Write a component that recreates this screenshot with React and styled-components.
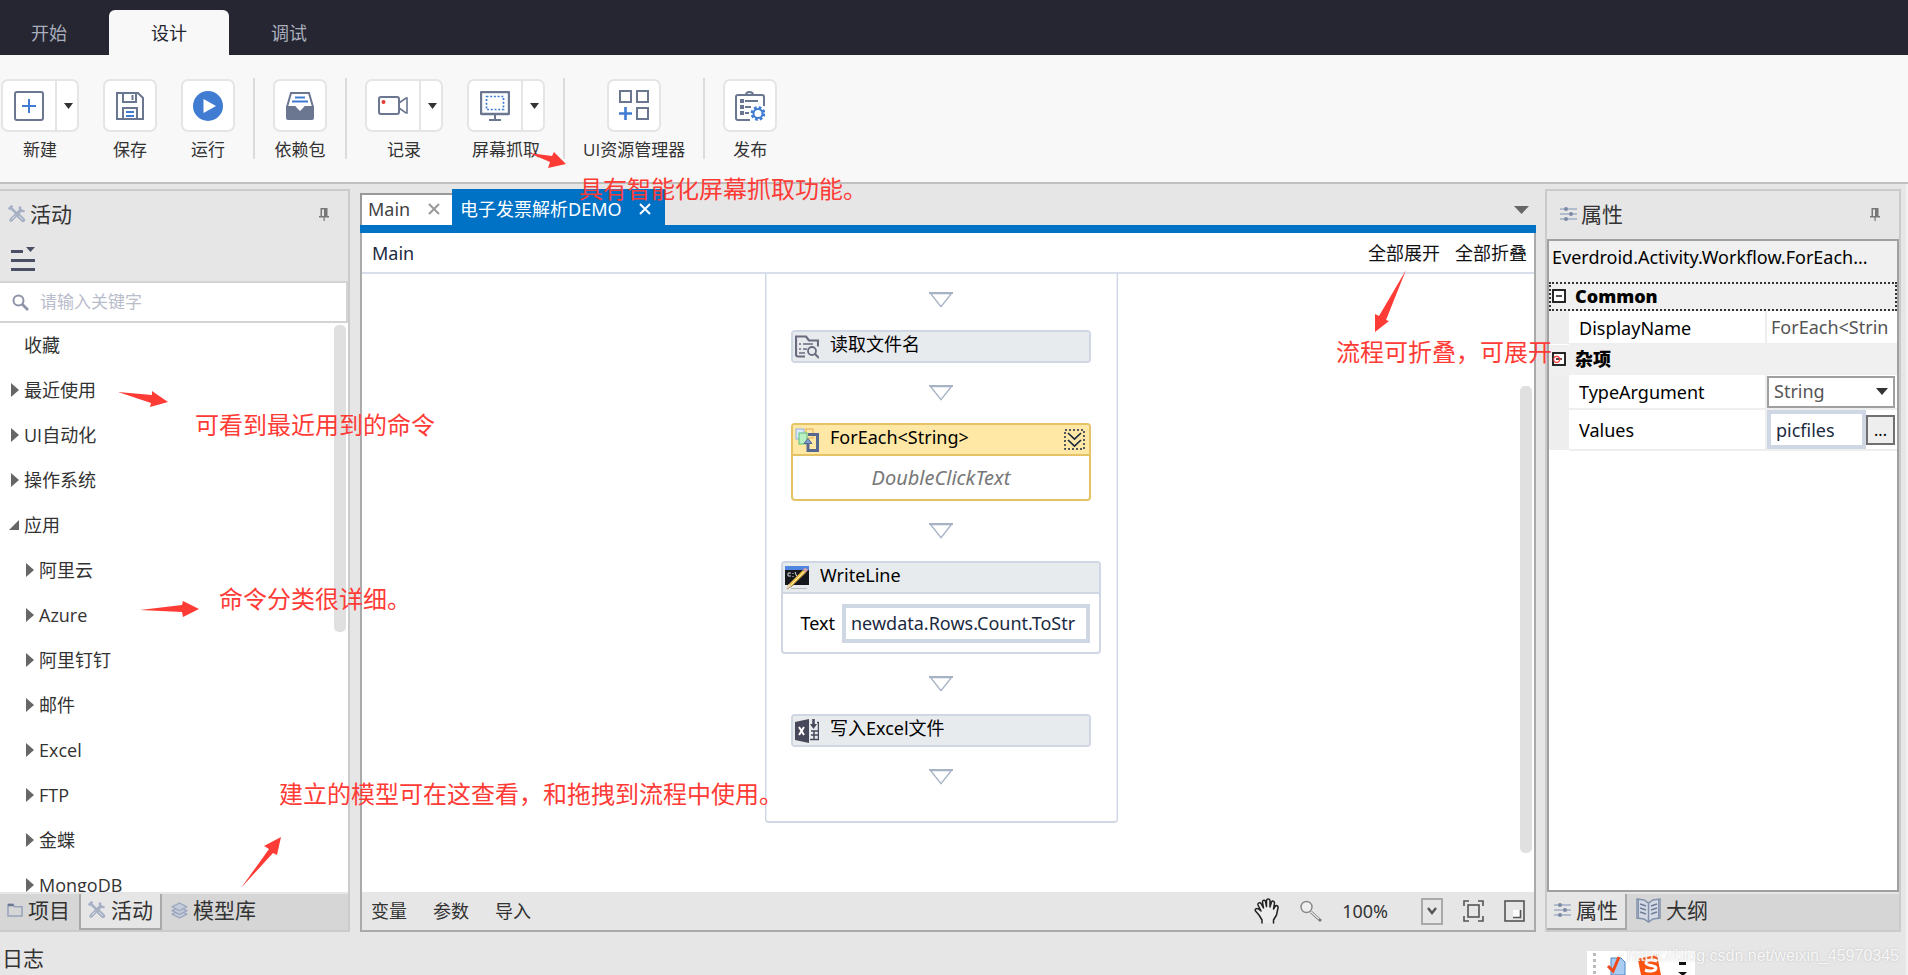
import React from "react";
import styled, { createGlobalStyle, css } from "styled-components";

const sans = `"Open Sans", "Noto Sans CJK SC", sans-serif`;
const wideSans = `"Noto Sans", "Noto Sans CJK SC", sans-serif`;
const line = "#cfd6e4";
const slate = "#6b7790";
const blue = "#3f7cd2";
const red = "#ff3b36";

const Global = createGlobalStyle`
  *, *::before, *::after { box-sizing: border-box; }
  body { margin: 0; background: #e6e6e6; }
  button, input, select { font: inherit; color: inherit; margin: 0; padding: 0; border: 0; background: none; outline: 0; }
  ul { list-style: none; margin: 0; padding: 0; }
  svg { display: block; flex: none; }
`;

const Page = styled.div`
  position: relative;
  display: flex;
  flex-direction: column;
  height: 100vh;
  overflow: hidden;
  font-family: ${sans};
  font-size: 18px;
  line-height: 24px;
  color: #333;
  white-space: nowrap;
  background: #e6e6e6;
`;

/* ---------- top menu ---------- */
const MenuBar = styled.nav`
  display: flex;
  align-items: flex-end;
  flex: none;
  height: 55px;
  background: #252631;
`;
const MenuTab = styled.button`
  width: 120px;
  height: 45px;
  border-radius: 6px 6px 0 0;
  color: ${(p) => (p.$active ? "#252631" : "#a9aebd")};
  background: ${(p) => (p.$active ? "#f8f8f8" : "transparent")};
  &:first-child { width: 109px; padding-right: 11px; }
`;

/* ---------- ribbon ---------- */
const Ribbon = styled.header`
  display: flex;
  align-items: flex-start;
  flex: none;
  height: 129px;
  padding: 23px 0 0 1px;
  background: #f8f8f8;
  border-bottom: 2px solid #bfbfbf;
  font-size: 17px;
`;
const RibbonGroup = styled.div`
  display: flex;
  gap: 24px;
  padding: 1px 18px 0;
  border-left: 2px solid #dcdcdc;
  height: 81px;
  &:first-child { border-left: 0; padding-left: 0; }
`;
const Tool = styled.div`
  display: flex;
  flex-direction: column;
  align-items: center;
  gap: 6px;
`;
const ToolFrame = styled.div`
  display: flex;
  flex: none;
  height: 53px;
  border: 2px solid #e5e5e5;
  border-radius: 7px;
  background: #fff;
`;
const ToolButton = styled.button`
  display: grid;
  place-items: center;
  width: ${(p) => (p.$split ? 52 : 50)}px;
`;
const SplitButton = styled.button`
  && {
    display: grid;
    place-items: center;
    width: 22px;
    padding-left: 3px;
    border-left: 2px solid #e5e5e5;
  }
`;

/* ---------- workspace ---------- */
const Workspace = styled.main`
  display: flex;
  flex: 1;
  min-height: 0;
  padding: 5px 5px 0 0;
  border-right: 2px solid #f2f2f2;
`;
const SidePanel = styled.section`
  display: flex;
  flex-direction: column;
  flex: none;
  width: ${(p) => p.$width}px;
  border: 2px solid #cbcbcb;
  ${(p) => p.$flush && css`border-left: 0;`}
`;
const PanelHeader = styled.div`
  display: flex;
  align-items: center;
  gap: 4px;
  height: 48px;
  flex: none;
  padding: 0 ${(p) => p.$right}px 2px ${(p) => p.$left}px;
  font-size: 21px;
`;
const PinButton = styled.button`
  margin-left: auto;
`;
const FilterRow = styled.div`
  flex: none;
  height: 42px;
  padding: 8px 11px;
`;
const SearchBox = styled.label`
  display: flex;
  align-items: center;
  gap: 11px;
  flex: none;
  height: 42px;
  padding-left: 12px;
  border: 2px solid #d3d3d3;
  border-left: 0;
  background: #fff;
  font-size: 17px;
  input { flex: 1; min-width: 0; }
  input::placeholder { color: #b9bcca; opacity: 1; }
`;
const TreeArea = styled.div`
  display: flex;
  justify-content: space-between;
  flex: 1;
  min-height: 0;
  overflow: hidden;
  background: #fff;
`;
const Tree = styled.ul`
  flex: 1;
  min-width: 0;
`;
const TreeItem = styled.button`
  display: flex;
  align-items: center;
  gap: 5px;
  height: 45px;
  && { padding: 0 0 2px ${(p) => (p.$level ? 24 : 9)}px; }
`;
const Marker = styled.span`
  display: grid;
  align-items: center;
  justify-items: end;
  width: 10px;
  height: 14px;
`;
const Thumb = styled.div`
  flex: none;
  width: 12px;
  height: ${(p) => p.$length}px;
  margin: ${(p) => p.$top}px 2px 0 0;
  border-radius: 5px;
  background: #e0e0e0;
`;
const DockTabs = styled.div`
  display: flex;
  flex: none;
  height: 38px;
  border-top: 2px solid #e6e6e6;
  background: #d6d6d6;
  font-size: 21px;
`;
const DockTab = styled.button`
  && {
    display: flex;
    align-items: center;
    gap: 5px;
    padding: 0 7px 2px;
    border: solid transparent;
    border-width: 0 2px 2px;
    ${(p) => p.$first && css`border-left-width: 0;`}
    ${(p) => p.$active && css`
      background: #e6e6e6;
      border-color: #a9a9a9;
    `}
  }
`;

/* ---------- designer ---------- */
const Designer = styled.section`
  display: flex;
  flex-direction: column;
  flex: 1;
  min-width: 0;
  margin: 0 9px 0 10px;
  font-family: ${wideSans};
`;
const DocTabs = styled.div`
  display: flex;
  align-items: flex-end;
  flex: none;
  height: 44px;
  border-bottom: 8px solid #0072c6;
`;
const DocTab = styled.div`
  display: flex;
  align-items: center;
  justify-content: space-between;
  width: ${(p) => (p.$active ? 213 : 92)}px;
  height: ${(p) => (p.$active ? 36 : 32)}px;
  padding: ${(p) => (p.$active ? "3px 14px 0 8px" : "0 12px 2px 6px")};
  color: ${(p) => (p.$active ? "#fff" : "#444")};
  background: ${(p) => (p.$active ? "#0072c6" : "#fff")};
  ${(p) => !p.$active && css`
    border: solid #999;
    border-width: 2px 0 0 2px;
  `}
`;
const TabList = styled.button`
  && { margin: 0 7px 11px auto; }
`;
const DesignerFrame = styled.div`
  display: flex;
  flex-direction: column;
  flex: 1;
  min-height: 0;
  border: solid #aaa;
  border-width: 0 2px 2px;
  background: #fff;
`;
const Breadcrumb = styled.div`
  display: flex;
  align-items: center;
  gap: 15px;
  flex: none;
  height: 41px;
  padding: 0 7px 0 10px;
  border-bottom: 2px solid #d8deea;
  color: #111;
`;
const Crumb = styled.span`
  margin-right: auto;
  color: #1b2a41;
`;
const Canvas = styled.div`
  display: grid;
  grid-template-columns: 1fr 14px;
  flex: 1;
  min-height: 0;
  overflow: hidden;
`;
const Sequence = styled.div`
  display: flex;
  flex-direction: column;
  align-items: center;
  gap: 22px;
  justify-self: center;
  align-self: start;
  width: 353px;
  padding: 18px 0 36px;
  border: solid ${line};
  border-width: 0 1px 2px;
  border-radius: 0 0 4px 4px;
  box-shadow: inset 1px 0 #eceff5, inset -1px 0 #eceff5;
`;
const Node = styled.div`
  width: ${(p) => (p.$wide ? 320 : 300)}px;
  border: 2px solid ${(p) => (p.$selected ? "#e5c365" : line)};
  border-radius: 4px;
  background: #fff;
  overflow: hidden;
`;
const NodeHead = styled.div`
  display: flex;
  align-items: center;
  gap: 11px;
  height: 29px;
  padding: 0 4px 0 2px;
  color: #000;
  background: ${(p) => (p.$selected ? "#ffe8a6" : "#e8ebee")};
  span { padding-bottom: 5px; }
  button { margin-left: auto; }
`;
const NodeBody = styled.div`
  display: flex;
  align-items: center;
  justify-content: ${(p) => (p.$field ? "flex-end" : "center")};
  gap: 7px;
  height: ${(p) => p.$height}px;
  padding: 0 9px;
  border-top: 2px solid ${(p) => (p.$selected ? "#e5c365" : line)};
  color: #000;
`;
const Hint = styled.em`
  font-size: 20px;
  color: #777;
`;
const ExprInput = styled.input`
  && {
    width: ${(p) => p.$width}px;
    height: 39px;
    padding: 0 5px;
    border: 4px solid ${line};
    background: #fff;
    color: #1b2a41;
  }
`;
const StatusBar = styled.div`
  display: flex;
  align-items: center;
  flex: none;
  gap: 26px;
  height: 38px;
  padding: 0 9px;
  background: #e6e6e6;
`;
const ZoomTools = styled.div`
  display: flex;
  align-items: center;
  gap: 20px;
  margin-left: auto;
`;
const ZoomField = styled.div`
  display: flex;
  align-items: center;
  gap: 33px;
`;
const ZoomDrop = styled.button`
  && {
    display: grid;
    place-items: center;
    width: 22px;
    height: 27px;
    border: 2px solid #a9a9a9;
  }
`;

/* ---------- property grid ---------- */
const Grid = styled.div`
  flex: 1;
  min-height: 0;
  border: 2px solid #a0a0a0;
  background: #fff;
  color: #000;
  font-family: ${wideSans};
`;
const GridTitle = styled.div`
  height: 41px;
  padding: 4px 3px 0;
  background: #f0f0f0;
`;
const PropTable = styled.table`
  width: 100%;
  table-layout: fixed;
  border-collapse: collapse;
  td, th { padding: 0; text-align: left; font-weight: 400; overflow: hidden; }
`;
const GutterCol = styled.col`
  width: 20px;
`;
const NameCol = styled.col`
  width: 197px;
`;
const CategoryRow = styled.tr`
  height: ${(p) => (p.$focus ? 29 : 31)}px;
  background: #f0f0f0;
  ${(p) => p.$focus && css`outline: 2px dotted #333; outline-offset: -2px;`}
  && th { font-weight: 700; padding-bottom: 2px; }
`;
const CategoryToggle = styled.button`
  && {
    display: flex;
    align-items: center;
    gap: 9px;
    padding-left: 3px;
  }
`;
const PropRow = styled.tr`
  height: ${(p) => p.$height}px;
`;
const Gutter = styled.td`
  background: #eee;
`;
const NameCell = styled.th`
  && {
    padding: 1px 0 0 10px;
    border: solid #eee;
    border-width: 0 2px 2px 0;
  }
`;
const ValueCell = styled.td`
  border-bottom: 2px solid #eee;
  color: #555;
`;
const ReadOnlyValue = styled.span`
  display: block;
  margin: 0 4px;
  overflow: hidden;
`;
const SelectWrap = styled.div`
  display: grid;
  align-items: center;
  height: 32px;
  margin-right: 2px;
  border: 2px solid #a0a0a0;
  select {
    grid-area: 1 / 1;
    appearance: none;
    padding: 0 5px 2px;
  }
  svg { grid-area: 1 / 1; justify-self: end; margin-right: 5px; pointer-events: none; }
`;
const ValueEditor = styled.div`
  display: flex;
  align-items: center;
  margin-right: 2px;
`;
const MoreButton = styled.button`
  && {
    flex: 1;
    height: 30px;
    border: 2px solid #707070;
    background: #eee;
    color: #000;
    font-size: 16px;
  }
`;

/* ---------- footer and overlays ---------- */
const LogBar = styled.footer`
  display: flex;
  align-items: center;
  flex: none;
  height: 43px;
  padding: 8px 2px 0;
  border-right: 2px solid #f2f2f2;
  font-size: 21px;
`;
const Ime = styled.div`
  position: absolute;
  right: 213px;
  bottom: 0;
  width: 108px;
  height: 24px;
  background: #fff;
`;
const Watermark = styled.div`
  position: absolute;
  right: 9px;
  bottom: 7px;
  font-family: "Liberation Sans", sans-serif;
  font-size: 16px;
  color: rgba(255, 255, 255, 0.85);
  text-shadow: 0 0 2px rgba(150, 150, 150, 0.5);
`;
const Note = styled.div`
  position: absolute;
  left: ${(p) => p.$x}px;
  top: ${(p) => p.$y}px;
  font-size: 24px;
  line-height: 36px;
  color: ${red};
  pointer-events: none;
`;
const ArrowLayer = styled.svg`
  position: absolute;
  left: 0;
  top: 0;
  pointer-events: none;
  fill: ${red};
`;

/* ---------- icons ---------- */
const Down = ({ w = 9, h = 6, fill = "#333" }) => (
  <svg width={w} height={h} viewBox="0 0 10 6" preserveAspectRatio="none"><path d="M0 0h10L5 6z" fill={fill} /></svg>
);
const Close = ({ color }) => (
  <svg width="12" height="12" viewBox="0 0 12 12" stroke={color} strokeWidth="2"><path d="M1 1l10 10M11 1L1 11" /></svg>
);
const Pin = () => (
  <svg width="10" height="13" viewBox="0 0 10 13">
    <path d="M1.500 0h7v8h1.500v1.500H0V8h1.500z" fill="#777" /><path d="M3 1.500h2V8H3z" fill="#e6e6e6" /><path d="M4.500 9h1.200v4H4.500z" fill="#777" />
  </svg>
);
const ToolsIcon = () => (
  <svg width="18" height="18" viewBox="0 0 18 18" fill="none" stroke="#a7b1c5" strokeLinecap="round">
    <path d="M3 3l6 6" strokeWidth="2.600" /><path d="M11 11l4 4" strokeWidth="4.400" />
    <path d="M3 15L12.500 5.500" strokeWidth="3.600" /><path d="M12 2.500a3 3 0 0 0 3.500 3.500M1.500 3.500l2-2" strokeWidth="2.600" />
    <path d="M11.500 11.500l3 3M4 14l3-3" stroke="#dfe3ea" strokeWidth="1" />
  </svg>
);
const SlidersIcon = () => (
  <svg width="17" height="16" viewBox="0 0 17 16" stroke="#a3aec3" strokeWidth="1.500" fill="#7d8ba6">
    <path d="M0 3h17M0 8h17M0 13h17" /><g stroke="#7d8ba6"><circle cx="6" cy="3" r="1.300" /><circle cx="11" cy="8" r="1.300" /><circle cx="6" cy="13" r="1.300" /></g>
  </svg>
);
const FolderIcon = () => (
  <svg width="16" height="14" viewBox="0 0 16 14" fill="none" stroke="#97a3bb" strokeWidth="1.500">
    <path d="M1 1.500h5l1.500 2.200H15V13H1z" /><path d="M1 2h5.500" stroke="#6b7790" strokeWidth="2.500" />
  </svg>
);
const LayersIcon = () => (
  <svg width="17" height="17" viewBox="0 0 17 17" stroke="#9aa6bd" strokeWidth="1.300" fill="#c3cad8" strokeLinejoin="round">
    <path d="M8.500 8.500L16 12.200 8.500 16 1 12.200z" /><path d="M8.500 5L16 8.600 8.500 12.400 1 8.600z" /><path d="M8.500 1L16 4.800 8.500 8.800 1 4.800z" />
  </svg>
);
const BookIcon = () => (
  <svg width="25" height="25" viewBox="0 0 25 25" fill="#d3dae6" stroke="#8491ab" strokeWidth="1.500">
    <path d="M1 1l7 1 4.500 3L17 2l7-1v19l-7 1-4.500 3L8 21l-7-1z" /><path d="M12.500 5v19" fill="none" /><path d="M2.500 2v18M22.500 2v18" fill="none" strokeWidth="1" />
    <path d="M4 6l6 2M4 10l6 2M4 14l6 2M15 8l6-2M15 12l6-2M15 16l6-2" fill="none" stroke="#6f7d99" />
  </svg>
);
const MenuIcon = () => (
  <svg width="24" height="24" viewBox="0 0 24 24" fill="#4b4f63"><path d="M0 3h12v3H0zM0 12h24v3H0zM0 21h24v3H0zM15 0h9l-4.500 5z" /></svg>
);
const SearchIcon = () => (
  <svg width="17" height="17" viewBox="0 0 17 17" fill="none" stroke="#8d93a8"><circle cx="6.500" cy="6.500" r="5" strokeWidth="2" /><path d="M10 10l6 6" strokeWidth="2.600" /></svg>
);
const NewIcon = () => (
  <svg width="30" height="30" viewBox="0 0 30 30" fill="none" strokeWidth="2"><rect x="1" y="1" width="28" height="28" rx="2" stroke={slate} /><path d="M15 8v14M8 15h14" stroke={blue} /></svg>
);
const SaveIcon = () => (
  <svg width="28" height="28" viewBox="0 0 28 28" fill="none" stroke={slate} strokeWidth="2">
    <path d="M1 1h21l5 5v21H1z" /><path d="M7 1v9h13V1M16.500 3v5M7 27V16h14v11" /><path d="M10 20h8M10 24h8" stroke={blue} />
  </svg>
);
const RunIcon = () => (
  <svg width="30" height="30" viewBox="0 0 30 30"><circle cx="15" cy="15" r="15" fill={blue} /><path d="M10.500 8l12.500 7-12.500 7z" fill="#fff" /></svg>
);
const PackageIcon = () => (
  <svg width="28" height="28" viewBox="0 0 28 28">
    <path d="M1 15L5 1h18l4 14" fill="#fff" stroke={slate} strokeWidth="2" /><path d="M9 5.500h10M6 9.500h16" stroke={blue} strokeWidth="2" />
    <path d="M0 14h9c1 0 1 1 2 2l3 3 3-3c1-1 1-2 2-2h9v12a2 2 0 0 1-2 2H2a2 2 0 0 1-2-2z" fill={slate} />
  </svg>
);
const RecordIcon = () => (
  <svg width="30" height="20" viewBox="0 0 30 20" fill="none" stroke={slate} strokeWidth="2">
    <rect x="1" y="1" width="20" height="17" rx="2" /><path d="M21 7l7-5h1v15h-1l-7-5" strokeWidth="1.600" /><circle cx="5.500" cy="6" r="2" fill="#e23b32" stroke="none" />
  </svg>
);
const ScreenIcon = () => (
  <svg width="30" height="30" viewBox="0 0 30 30" fill="none" stroke={slate} strokeWidth="2">
    <rect x="1" y="1" width="28" height="22" rx="1" strokeWidth="2.400" /><path d="M15 24v5M9 29h12" /><rect x="6.500" y="5.500" width="17" height="13" stroke={blue} strokeDasharray="2 1.700" strokeWidth="1.700" />
  </svg>
);
const UiIcon = () => (
  <svg width="31" height="31" viewBox="0 0 31 31" fill="none" stroke={slate} strokeWidth="2"><path d="M1 1h11v11H1zM18 1h11v11H18zM18 18h11v11H18z" /><path d="M6.500 17v13M0 23.500h13" stroke={blue} strokeWidth="2.600" /></svg>
);
const PublishIcon = () => (
  <svg width="30" height="30" viewBox="0 0 30 30" fill="none" stroke={slate} strokeWidth="2">
    <path d="M15 29H3a2 2 0 0 1-2-2V6a2 2 0 0 1 2-2h24a2 2 0 0 1 2 2v9" /><path d="M11 4c0-4 7-4 7 0" />
    <path d="M10 10h13M10 16h6M10 22h4" /><path d="M5 10h4M5 16h4M5 22h4" strokeWidth="4" />
    <circle cx="23" cy="22.500" r="6" stroke={blue} strokeWidth="2.800" strokeDasharray="2.700 2" /><circle cx="23" cy="22.500" r="4.500" stroke={blue} strokeWidth="2" />
  </svg>
);
const Connector = () => (
  <svg width="24" height="16" viewBox="0 0 24 16" fill="#fff" stroke="#a7b3c5"><path d="M1.500 1.500h21L12 14.700z" strokeWidth="1.400" /><path d="M0 1h24" strokeWidth="2" /></svg>
);
const ReadFileIcon = () => (
  <svg width="24" height="24" viewBox="0 0 24 24" fill="none" stroke="#6a6b7e" strokeWidth="2.200">
    <path d="M10 21.500H3a2 2 0 0 1-2-2V1.500h10l3 4h9v6" /><path d="M4 9h2M8 9h10M4 14h2M8 14h4M4 18h6" strokeWidth="1.600" /><circle cx="17" cy="16" r="4" strokeWidth="1.800" /><path d="M20 19l4 4" />
  </svg>
);
const ForEachIcon = () => (
  <svg width="24" height="24" viewBox="0 0 24 24" strokeWidth="1">
    <rect x="1" y="1" width="8" height="10" fill="#dce9fb" stroke="#8fb0e0" /><rect x="11" y="1" width="7" height="9" fill="#ffe9a8" stroke="#e0b050" /><rect x="4" y="5" width="8" height="11" fill="#b9f0c4" stroke="#5cc07c" />
    <path d="M13 6.500h9.500v16H13V14" fill="none" stroke="#56688f" strokeWidth="3" /><path d="M9 15.500l4-5 4 5z" fill="#7f9fd0" stroke="#56688f" />
  </svg>
);
const WriteLineIcon = () => (
  <svg width="24" height="24" viewBox="0 0 24 24">
    <path d="M0 0h24v19H0z" fill="#15171c" /><path d="M0 0h24v4H0z" fill="#4f86e0" /><path d="M6 7H3v3h3M8 7v1M8 10v1M10 6l2 5" fill="none" stroke="#ddd" />
    <path d="M6 22.500h16" stroke="#bbb" /><path d="M2 23l2-5L18 4l3 2.500L7 20z" fill="#eec044" stroke="#7c6840" strokeWidth=".8" /><path d="M6 19L19.500 5.300" stroke="#fff0b8" strokeWidth="1" /><path d="M1 23.500l2.500-5.500 3 2z" fill="#e9d8b8" /><path d="M18 4l2-2.500 3 2.500-2 2.500z" fill="#dca0a8" />
  </svg>
);
const ExcelIcon = () => (
  <svg width="24" height="24" viewBox="0 0 24 24" fill="none" stroke="#47485a">
    <path d="M0 3l14-3v24L0 21z" fill="#47485a" stroke="none" /><path d="M4 8l5 8M9 8l-5 8" stroke="#fff" strokeWidth="2" />
    <path d="M15 20.500h8.500v-17H22M16 12h7M16 16h7M19 12v8" strokeWidth="1.500" /><path d="M18.500 0v6" strokeWidth="2.500" /><path d="M15 5h7l-3.500 5z" fill="#47485a" stroke="none" />
  </svg>
);
const ExpandIcon = () => (
  <svg width="21" height="21" viewBox="0 0 21 21" fill="none" stroke="#1b2a41"><rect x="1" y="1" width="19" height="19" strokeDasharray="2 2" strokeWidth="1.500" /><path d="M4 4l6.500 6L17 4M4 11l6.500 6 6.500-6" strokeWidth="1.700" /></svg>
);
const HandIcon = () => (
  <svg width="26" height="26" viewBox="0 0 26 26" fill="#ededed" stroke="#222" strokeWidth="1.500" strokeLinejoin="round" strokeLinecap="round">
    <path d="M8 25v-3l-3-5-3.500-4c-1-2 1-3 3-2L7 13 4 7c-.5-2 2-3 3-1.500L9.500 10 8.500 4c0-2 2.500-2.500 3-.5l1 5V2.500c.500-2 3-2 3.500 0V9l1.500-5c1-1.500 3-1 3 1l-1 6 1.500-2.500c1-1.500 3.500-1 3 1.500l-1.500 7-3 5v3" />
  </svg>
);
const LoupeIcon = () => (
  <svg width="22" height="22" viewBox="0 0 22 22"><circle cx="6.500" cy="7" r="5.500" fill="#efefef" stroke="#888" strokeWidth="1.400" /><path d="M11 12l10 9" stroke="#777" strokeWidth="2.800" /><path d="M11 12l8 7" stroke="#eee" strokeWidth="1.200" /></svg>
);
const FitIcon = () => (
  <svg width="21" height="22" viewBox="0 0 21 22" fill="none" stroke="#555" strokeWidth="1.600"><rect x="5" y="5" width="11" height="12" /><path d="M1 6V1h5M15 1h5v5M20 16v5h-5M6 21H1v-5" /></svg>
);
const OverviewIcon = () => (
  <svg width="21" height="22" viewBox="0 0 21 22" fill="none" stroke="#555" strokeWidth="1.600"><rect x="1" y="1" width="19" height="20" /><path d="M9 10h7v7H9z" fill="#fff" stroke="none" /><path d="M16.500 10v7.500H9" /></svg>
);
const ToggleBox = () => (
  <svg width="14" height="14" viewBox="0 0 14 14" fill="#fff" stroke="#111"><rect x="1" y="1" width="12" height="12" strokeWidth="1.800" /><path d="M4 7h6" strokeWidth="1.500" /></svg>
);
const ImeIcons = () => (
  <svg width="108" height="24" viewBox="0 0 108 24">
    <path d="M7.500 2v22" stroke="#bbb" strokeWidth="3" strokeDasharray="3 3" />
    <path d="M24 7h10l4 4v13H24z" fill="#a9cdf2" stroke="#4c86c8" /><path d="M21 15l5 5 6-14" fill="none" stroke="#f04a1c" strokeWidth="3" />
    <path d="M51 9q1-2 3-2l16-3 4 20H54z" fill="#fb5412" /><path d="M70 10c-6-2-11-1-11 2s10 2 10 5-6 4-11 2" fill="none" stroke="#fff" strokeWidth="3" />
    <path d="M92 11h7v3h-7zM91 21h9l-4 4z" fill="#111" />
  </svg>
);

/* ---------- data ---------- */
const ribbon = [
  [["新建", NewIcon, true], ["保存", SaveIcon], ["运行", RunIcon]],
  [["依赖包", PackageIcon]],
  [["记录", RecordIcon, true], ["屏幕抓取", ScreenIcon, true]],
  [["UI资源管理器", UiIcon]],
  [["发布", PublishIcon]],
];
const tree = [
  ["收藏", 0, ""], ["最近使用", 0, "closed"], ["UI自动化", 0, "closed"], ["操作系统", 0, "closed"], ["应用", 0, "open"],
  ["阿里云", 1, "closed"], ["Azure", 1, "closed"], ["阿里钉钉", 1, "closed"], ["邮件", 1, "closed"],
  ["Excel", 1, "closed"], ["FTP", 1, "closed"], ["金蝶", 1, "closed"], ["MongoDB", 1, "closed"],
];
const notes = [
  ["具有智能化屏幕抓取功能。", 579, 171],
  ["可看到最近用到的命令", 195, 407],
  ["命令分类很详细。", 219, 581],
  ["建立的模型可在这查看，和拖拽到流程中使用。", 279, 776],
  ["流程可折叠，可展开。", 1336, 334],
];
const arrows = [
  "529,153 552,156 554,152 566,164 548,168 550,162",
  "118,392 152,395 152,391 168,402 150,407 151,403",
  "140,610 182,605 183,601 199,609 183,617 182,612",
  "241,888 269,849 264,846 281,837 277,855 273,853",
  "1406,270 1386,320 1389,321 1375,332 1375,314 1379,316",
];

const Header = ({ title, icon, left, right }) => (
  <PanelHeader $left={left} $right={right}>
    {icon}<span>{title}</span><PinButton aria-label="固定"><Pin /></PinButton>
  </PanelHeader>
);

export default function App() {
  return (
    <Page>
      <Global />
      <MenuBar>
        <MenuTab>开始</MenuTab><MenuTab $active>设计</MenuTab><MenuTab>调试</MenuTab>
      </MenuBar>
      <Ribbon>
        {ribbon.map((group, i) => (
          <RibbonGroup key={i}>
            {group.map(([label, Icon, split]) => (
              <Tool key={label}>
                <ToolFrame>
                  <ToolButton $split={split} aria-label={label}><Icon /></ToolButton>
                  {split && <SplitButton aria-label={label + "选项"}><Down /></SplitButton>}
                </ToolFrame>
                <span>{label}</span>
              </Tool>
            ))}
          </RibbonGroup>
        ))}
      </Ribbon>

      <Workspace>
        <SidePanel $width={350} $flush>
          <Header title="活动" icon={<ToolsIcon />} left={8} right={19} />
          <FilterRow><button aria-label="筛选"><MenuIcon /></button></FilterRow>
          <SearchBox><SearchIcon /><input type="text" aria-label="搜索" placeholder="请输入关键字" /></SearchBox>
          <TreeArea>
            <Tree>
              {tree.map(([label, level, state]) => (
                <li key={label}>
                  <TreeItem $level={level}>
                    <Marker>
                      {state === "closed" && <svg width="8" height="14" viewBox="0 0 8 14"><path d="M0 0l8 7-8 7z" fill="#666" /></svg>}
                      {state === "open" && <svg width="10" height="10" viewBox="0 0 10 10"><path d="M10 0v10H0z" fill="#666" /></svg>}
                    </Marker>
                    {label}
                  </TreeItem>
                </li>
              ))}
            </Tree>
            <Thumb $length={307} $top={2} />
          </TreeArea>
          <DockTabs>
            <DockTab $first><FolderIcon /><span>项目</span></DockTab>
            <DockTab $active><ToolsIcon /><span>活动</span></DockTab>
            <DockTab><LayersIcon /><span>模型库</span></DockTab>
          </DockTabs>
        </SidePanel>

        <Designer>
          <DocTabs>
            <DocTab><span>Main</span><button aria-label="关闭"><Close color="#999" /></button></DocTab>
            <DocTab $active><span>电子发票解析DEMO</span><button aria-label="关闭"><Close color="#fff" /></button></DocTab>
            <TabList aria-label="标签列表"><Down w={15} h={8} fill="#666" /></TabList>
          </DocTabs>
          <DesignerFrame>
            <Breadcrumb><Crumb>Main</Crumb><button>全部展开</button><button>全部折叠</button></Breadcrumb>
            <Canvas>
              <Sequence>
                <Connector />
                <Node><NodeHead><ReadFileIcon /><span>读取文件名</span></NodeHead></Node>
                <Connector />
                <Node $selected>
                  <NodeHead $selected><ForEachIcon /><span>ForEach&lt;String&gt;</span><button aria-label="展开"><ExpandIcon /></button></NodeHead>
                  <NodeBody $selected $height={45}><Hint>DoubleClickText</Hint></NodeBody>
                </Node>
                <Connector />
                <Node $wide>
                  <NodeHead><WriteLineIcon /><span>WriteLine</span></NodeHead>
                  <NodeBody $field $height={60}><label htmlFor="line-text">Text</label><ExprInput id="line-text" $width={248} defaultValue="newdata.Rows.Count.ToStr" /></NodeBody>
                </Node>
                <Connector />
                <Node><NodeHead><ExcelIcon /><span>写入Excel文件</span></NodeHead></Node>
                <Connector />
              </Sequence>
              <Thumb $length={467} $top={112} />
            </Canvas>
            <StatusBar>
              <button>变量</button><button>参数</button><button>导入</button>
              <ZoomTools>
                <button aria-label="平移"><HandIcon /></button>
                <button aria-label="缩放"><LoupeIcon /></button>
                <ZoomField><span>100%</span><ZoomDrop aria-label="缩放比例"><svg width="10" height="8" viewBox="0 0 10 8"><path d="M1 1l4 5 4-5" fill="none" stroke="#555" strokeWidth="2.400" /></svg></ZoomDrop></ZoomField>
                <button aria-label="适应屏幕"><FitIcon /></button>
                <button aria-label="概览"><OverviewIcon /></button>
              </ZoomTools>
            </StatusBar>
          </DesignerFrame>
        </Designer>

        <SidePanel $width={356}>
          <Header title="属性" icon={<SlidersIcon />} left={13} right={19} />
          <Grid>
            <GridTitle>Everdroid.Activity.Workflow.ForEach...</GridTitle>
            <PropTable>
              <colgroup><GutterCol /><NameCol /><col /></colgroup>
              <tbody>
                <CategoryRow $focus><th colSpan={3}><CategoryToggle><ToggleBox /><b>Common</b></CategoryToggle></th></CategoryRow>
                <PropRow $height={33}><Gutter /><NameCell>DisplayName</NameCell><ValueCell><ReadOnlyValue>ForEach&lt;Strin</ReadOnlyValue></ValueCell></PropRow>
                <CategoryRow><th colSpan={3}><CategoryToggle><ToggleBox /><b>杂项</b></CategoryToggle></th></CategoryRow>
                <PropRow $height={34}>
                  <Gutter /><NameCell><label htmlFor="type-arg">TypeArgument</label></NameCell>
                  <ValueCell><SelectWrap><select id="type-arg"><option>String</option></select><Down w={12} h={7} /></SelectWrap></ValueCell>
                </PropRow>
                <PropRow $height={40}>
                  <Gutter /><NameCell><label htmlFor="values">Values</label></NameCell>
                  <ValueCell><ValueEditor><ExprInput id="values" $width={99} defaultValue="picfiles" /><MoreButton aria-label="编辑">...</MoreButton></ValueEditor></ValueCell>
                </PropRow>
              </tbody>
            </PropTable>
          </Grid>
          <DockTabs>
            <DockTab $first $active><SlidersIcon /><span>属性</span></DockTab>
            <DockTab><BookIcon /><span>大纲</span></DockTab>
          </DockTabs>
        </SidePanel>
      </Workspace>

      <LogBar>日志</LogBar>
      <Ime><ImeIcons /></Ime>
      <Watermark>https://blog.csdn.net/weixin_45970345</Watermark>
      {notes.map(([text, x, y]) => <Note key={text} $x={x} $y={y}>{text}</Note>)}
      <ArrowLayer width="1420" height="900" aria-hidden="true">
        {arrows.map((points) => <polygon key={points} points={points} />)}
      </ArrowLayer>
    </Page>
  );
}
